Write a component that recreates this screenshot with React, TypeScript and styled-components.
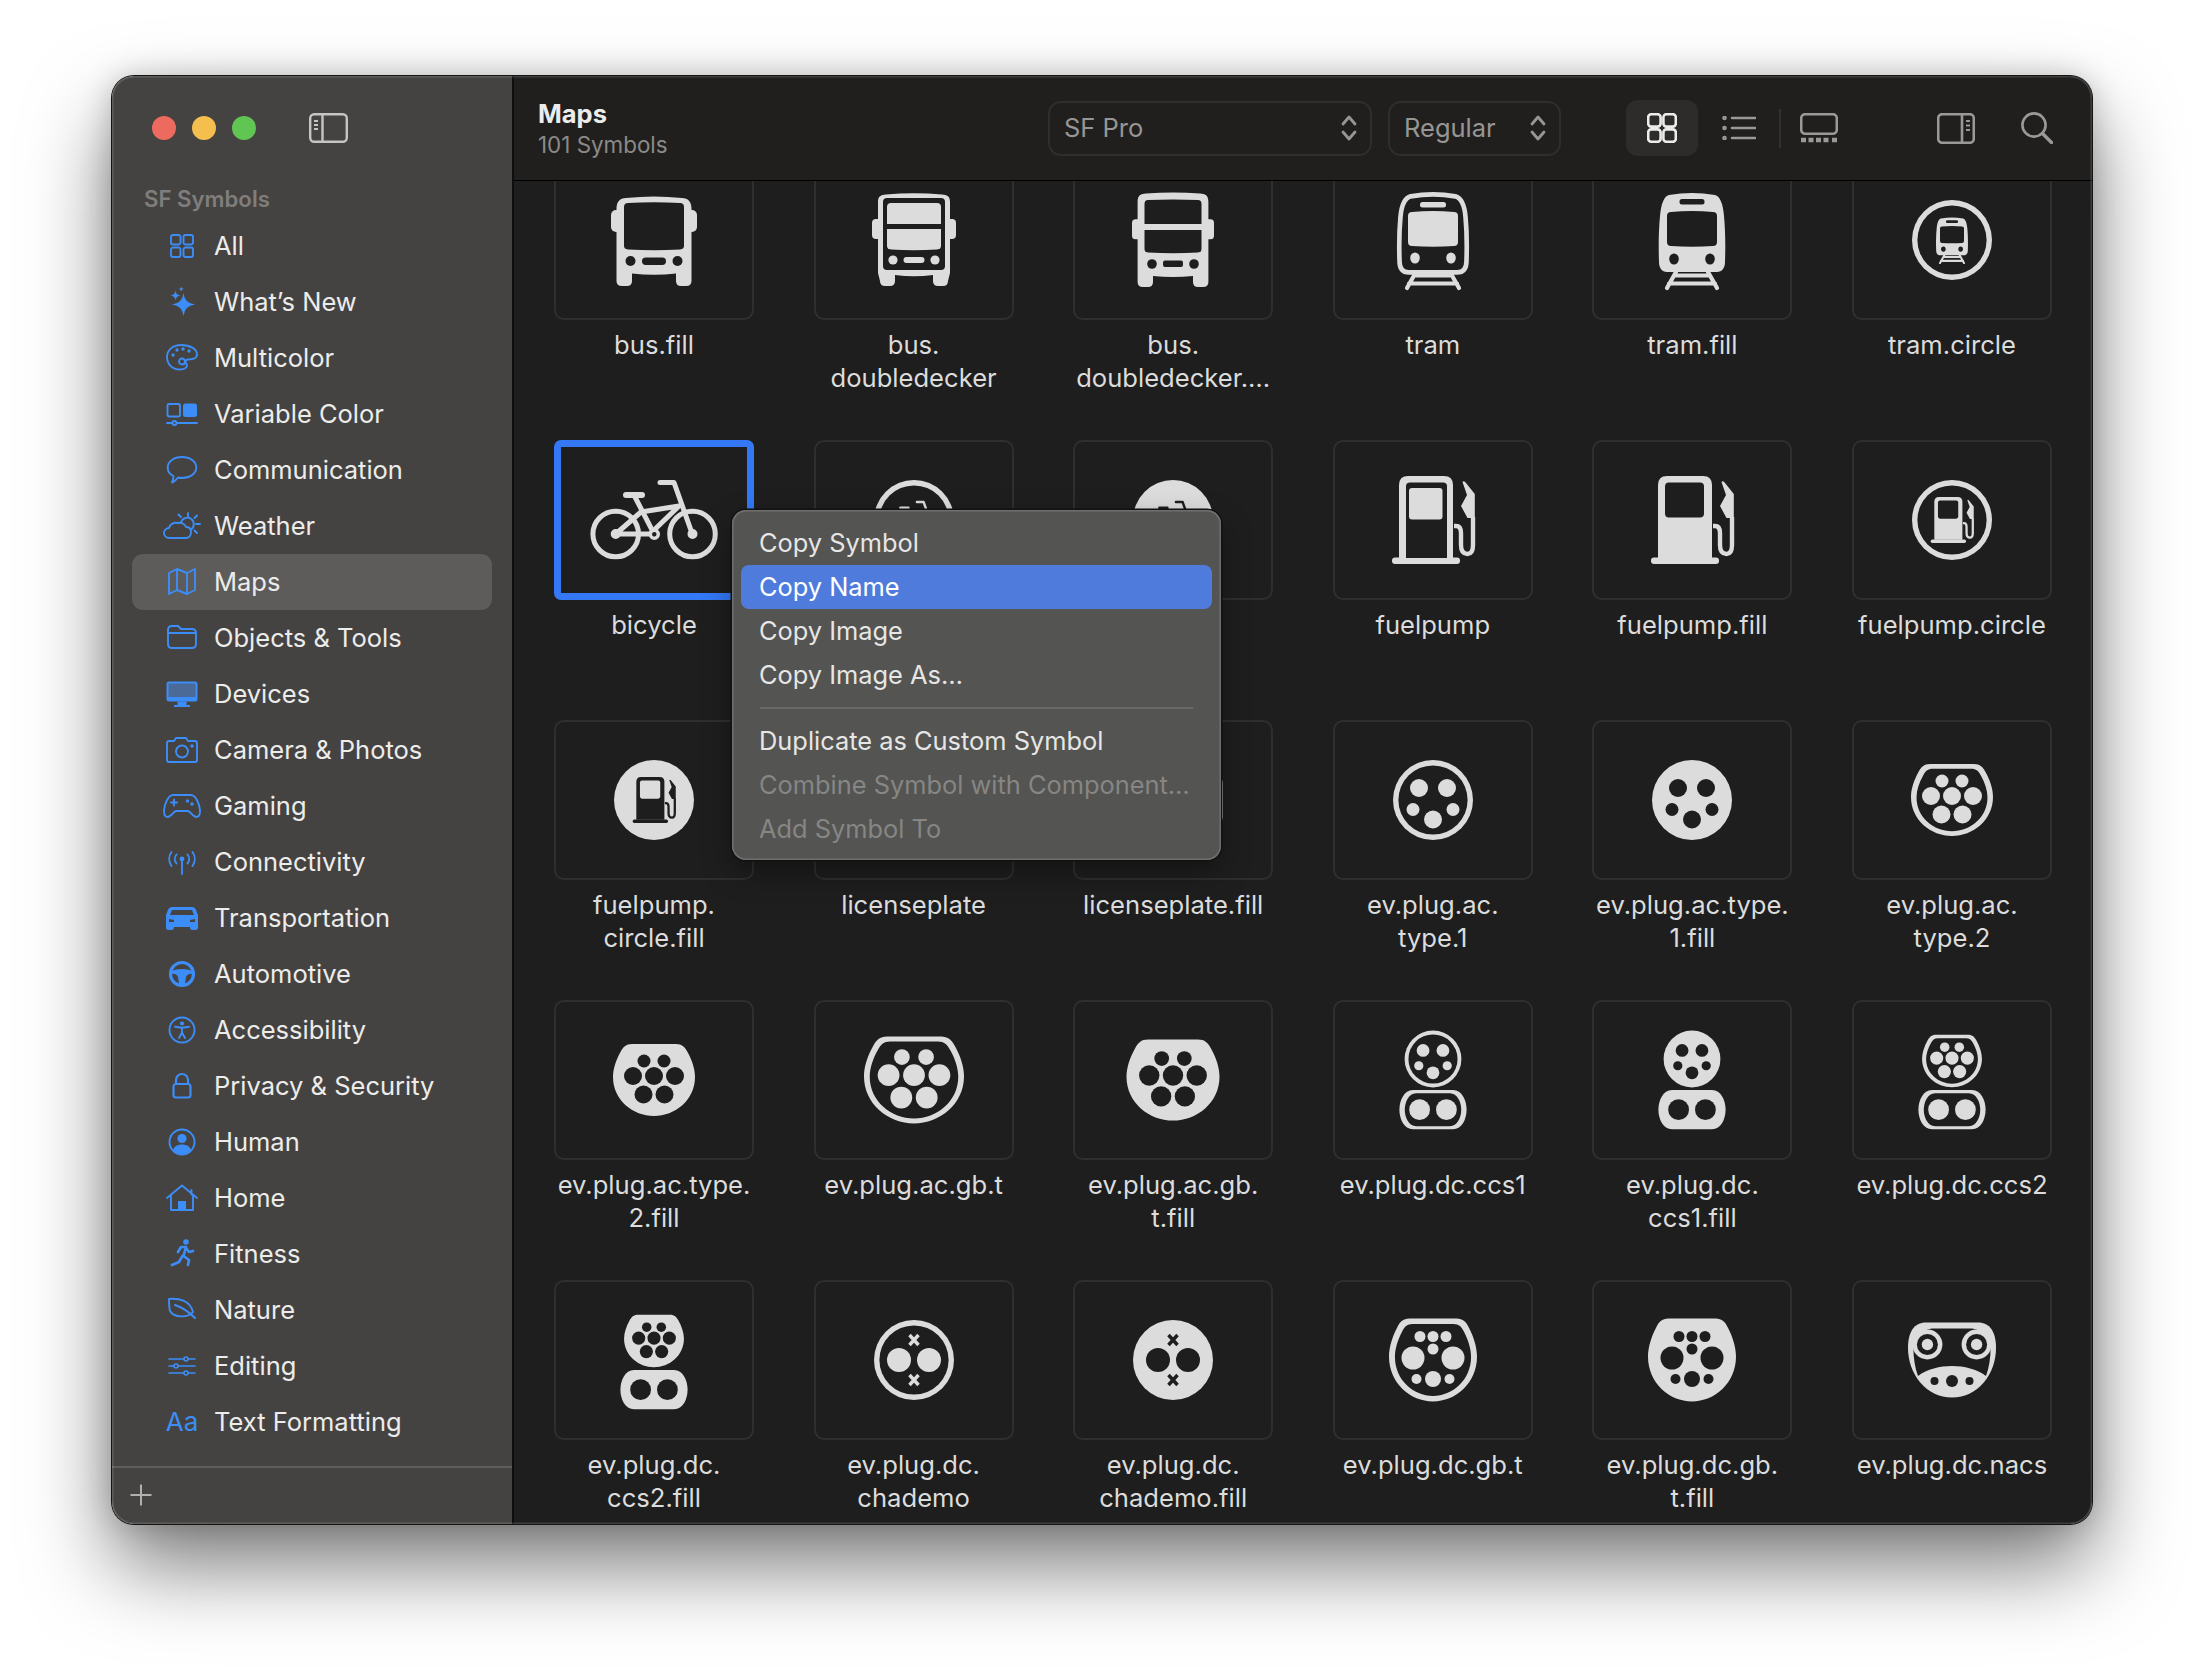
import React from "react";
import styled, { createGlobalStyle } from "styled-components";

const FG = "#dcdcdc";
const BG = "#1e1e1e";
const BLUE = "#3c8df7";
const FONT = `Inter, "Liberation Sans", sans-serif`;

const GlobalStyle = createGlobalStyle`
	html, body {
		margin: 0;
		padding: 0;
		background: #ffffff;
		font-family: ${FONT};
	}
`;

const Page = styled.div`
	width: 2204px;
	height: 1672px;
	padding: 76px 0 0 112px;
	box-sizing: border-box;
	overflow: hidden;
`;

const Window = styled.div`
	position: relative;
	width: 1980px;
	height: 1448px;
	display: flex;
	border-radius: 22px;
	overflow: hidden;
	box-shadow: 0 0 0 1px #141414, 0 42px 84px rgba(0, 0, 0, 0.52), 0 0 30px rgba(0, 0, 0, 0.2);
	&::after {
		content: "";
		position: absolute;
		inset: 0;
		border-radius: 22px;
		box-shadow: inset 0 0 0 1.5px rgba(255, 255, 255, 0.14);
		pointer-events: none;
	}
`;

/* sidebar */
const Sidebar = styled.aside`
	width: 400px;
	flex: none;
	display: flex;
	flex-direction: column;
	background: #454341;
`;

const TitleBar = styled.div`
	height: 104px;
	flex: none;
	display: flex;
	align-items: center;
	padding-left: 40px;
	gap: 16px;
`;

const Light = styled.span<{ $color: string }>`
	width: 24px;
	height: 24px;
	border-radius: 50%;
	background: ${(p) => p.$color};
`;

const SidebarToggle = styled.svg`
	margin-left: 37px;
	width: 39px;
	height: 30px;
	fill: none;
	stroke: #c6c5c4;
	stroke-width: 2.4;
`;

const SectionTitle = styled.div`
	height: 38px;
	line-height: 38px;
	padding-left: 32px;
	font-size: 22.2px;
	font-weight: 600;
	color: #7f7e7c;
`;

const NavList = styled.nav`
	display: flex;
	flex-direction: column;
`;

const NavItem = styled.div<{ $active?: boolean }>`
	height: 56px;
	margin: 0 20px;
	padding-left: 30px;
	display: flex;
	align-items: center;
	gap: 12px;
	border-radius: 11px;
	font-size: 25.5px;
	color: #ececeb;
	background: ${(p) => (p.$active ? "#5d5c5b" : "transparent")};
`;

const NavText = styled.span`
	margin-top: -2px;
`;

const NavIcon = styled.svg`
	width: 40px;
	height: 40px;
	flex: none;
	fill: none;
	stroke: ${BLUE};
	stroke-width: 1.9;
	stroke-linecap: round;
	stroke-linejoin: round;
`;

const NavGlyph = styled.span`
	width: 40px;
	flex: none;
	margin-top: -2px;
	text-align: center;
	font-size: 26px;
	color: ${BLUE};
`;

const SidebarFooter = styled.div`
	margin-top: auto;
	height: 58px;
	box-sizing: border-box;
	border-top: 2px solid #5f5e5c;
	padding-left: 18px;
	padding-bottom: 2px;
	display: flex;
	align-items: center;
`;

const PlusIcon = styled.svg`
	width: 22px;
	height: 22px;
	stroke: #b1b0af;
	stroke-width: 2;
`;

/* main pane */
const Main = styled.main`
	flex: 1;
	min-width: 0;
	display: flex;
	flex-direction: column;
	border-left: 2px solid #0e0e0e;
	background: ${BG};
`;

const Toolbar = styled.header`
	height: 105px;
	flex: none;
	box-sizing: border-box;
	display: flex;
	align-items: center;
	padding: 0 25px 0 24px;
	background: #201f1e;
	border-bottom: 1.5px solid #000;
`;

const TitleBlock = styled.div`
	flex: 1;
	display: flex;
	flex-direction: column;
	gap: 2px;
`;

const Title = styled.div`
	font-size: 25.5px;
	line-height: 30px;
	font-weight: 700;
	color: #ececec;
`;

const Subtitle = styled.div`
	font-size: 22.4px;
	line-height: 27px;
	color: #8b8a88;
`;

const Select = styled.div<{ $width: number; $gap?: number }>`
	width: ${(p) => p.$width}px;
	height: 55px;
	margin-left: ${(p) => p.$gap ?? 0}px;
	box-sizing: border-box;
	display: flex;
	align-items: center;
	justify-content: space-between;
	padding: 0 13px 2px 14px;
	border: 2px solid #2f2e2d;
	border-radius: 13px;
	font-size: 25.5px;
	color: #979694;
`;

const Chevrons = styled.svg`
	width: 16px;
	height: 28px;
	margin-top: 2px;
	fill: none;
	stroke: #979694;
	stroke-width: 2.8;
	stroke-linecap: round;
	stroke-linejoin: round;
`;

const ToolButton = styled.div<{ $width: number; $active?: boolean; $gap?: number }>`
	width: ${(p) => p.$width}px;
	height: 56px;
	margin-left: ${(p) => p.$gap ?? 0}px;
	display: flex;
	align-items: center;
	justify-content: center;
	border-radius: 12px;
	background: ${(p) => (p.$active ? "#2d2c2b" : "transparent")};
`;

const ToolSep = styled.span`
	width: 2px;
	height: 39px;
	background: #323130;
`;

const ToolIcon = styled.svg<{ $bright?: boolean }>`
	fill: none;
	stroke: ${(p) => (p.$bright ? "#ececec" : "#9a9998")};
	stroke-width: 2.6;
	stroke-linecap: round;
`;

const Content = styled.div`
	flex: 1;
	min-height: 0;
	overflow: hidden;
	padding-left: 40px;
`;

const SymbolGrid = styled.div`
	margin-top: -21px;
	display: grid;
	grid-template-columns: repeat(6, 200px);
	column-gap: 59.6px;
	grid-auto-rows: 280px;
`;

const Cell = styled.div`
	display: flex;
	flex-direction: column;
	align-items: center;
`;

const Card = styled.div<{ $selected?: boolean }>`
	width: 200px;
	height: 160px;
	box-sizing: border-box;
	flex: none;
	display: flex;
	align-items: center;
	justify-content: center;
	border: ${(p) => (p.$selected ? "7.5px solid #3478f6" : "2px solid #2f2f2f")};
	border-radius: ${(p) => (p.$selected ? "7px" : "10px")};
`;

const Glyph = styled.svg`
	width: 140px;
	height: 140px;
	flex: none;
	fill: ${FG};
`;

const Label = styled.div`
	margin-top: 9px;
	width: 240px;
	text-align: center;
	white-space: pre-line;
	font-size: 25.6px;
	line-height: 32.5px;
	color: ${FG};
`;

/* context menu */
const Menu = styled.div`
	position: absolute;
	left: 620px;
	top: 434px;
	width: 489px;
	height: 350px;
	box-sizing: border-box;
	padding: 11px 9px 9px;
	background: #545452;
	border-radius: 14px;
	box-shadow: 0 0 0 1.5px #111, inset 0 0 0 1.5px #6f6f6d, 0 12px 30px rgba(0, 0, 0, 0.35);
`;

const MenuItem = styled.div<{ $active?: boolean; $disabled?: boolean }>`
	height: 44px;
	padding: 0 0 2px 18px;
	box-sizing: border-box;
	display: flex;
	align-items: center;
	border-radius: 8px;
	font-size: 25.4px;
	color: ${(p) => (p.$active ? "#ffffff" : p.$disabled ? "#868684" : "#e6e6e5")};
	background: ${(p) => (p.$active ? "#4f7cdc" : "transparent")};
`;

const MenuSep = styled.div`
	height: 2px;
	margin: 10px 19px;
	background: #6a6a68;
`;

/* symbol drawings, coordinates are pixels from the middle of the card */
type Pin = [number, number, number];

const CIRCLE = "M0 -40 A40 40 0 1 1 0 40 A40 40 0 1 1 0 -40Z";
const TYPE2 =
	"M-22 -36 H22 C28 -36 31 -33 33.5 -28 C38 -20 41 -11 41 -3 C41 20 21 36 0 36 C-21 36 -41 20 -41 -3 C-41 -11 -38 -20 -33.5 -28 C-31 -33 -28 -36 -22 -36Z";
const CAPSULE =
	"M-20 -19.6 H20 C29 -19.6 33.6 -9 33.6 0 C33.6 9 29 19.6 20 19.6 H-20 C-29 19.6 -33.6 9 -33.6 0 C-33.6 -9 -29 -19.6 -20 -19.6Z";

const TYPE1_PINS: Pin[] = [[-14, -12, 9], [14, -12, 9], [-20, 9.5, 6.5], [20, 9.5, 6.5], [0, 19.5, 9]];
const TYPE2_PINS: Pin[] = [[-10, -19, 6.5], [10, -19, 6.5], [-21, -4, 9], [0, -4, 9], [21, -4, 9], [-10.5, 14.5, 9], [10.5, 14.5, 9]];
const CAPSULE_PINS: Pin[] = [[-13.4, 0, 10.4], [13.4, 0, 10.4]];
const GBT_PINS: Pin[] = [[-13, -23.5, 5.5], [0, -23.5, 5.5], [13, -23.5, 5.5], [0, -11, 5.5], [-20, -2, 11.5], [20, -2, 11.5], [-16.5, 19, 5], [0, 19, 8], [16.5, 19, 5]];

interface PlugProps {
	d: string;
	fill?: boolean;
	pins: Pin[];
	sx?: number;
	sy?: number;
	k?: number;
	cy?: number;
	inset?: number;
	children?: React.ReactNode;
}

const Plug = ({ d, fill, pins, sx = 1, sy = 1, k = 1, cy = 0, inset = 0.865, children }: PlugProps) => (
	<g transform={`translate(0 ${cy})`}>
		<path d={d} transform={`scale(${sx} ${sy})`} fill={FG} />
		{!fill && <path d={d} transform={`scale(${sx * inset} ${sy * inset})`} fill={BG} />}
		{pins.map(([x, y, r]) => (
			<circle key={`${x}-${y}`} cx={x * k} cy={y * k} r={r * k} fill={fill ? BG : FG} />
		))}
		{children}
	</g>
);

const Combo = ({ top, fill }: { top: "ccs1" | "ccs2"; fill?: boolean }) => (
	<>
		{top === "ccs1" ? (
			<Plug d={CIRCLE} sx={0.71} sy={0.71} k={0.71} cy={-21} pins={TYPE1_PINS} fill={fill} />
		) : (
			<Plug d={TYPE2} sx={0.73} sy={0.73} k={0.73} cy={-19} pins={TYPE2_PINS} fill={fill} />
		)}
		<Plug d={CAPSULE} cy={29.7} pins={CAPSULE_PINS} fill={fill} inset={0.84} />
	</>
);

const Cross = ({ y, color }: { y: number; color: string }) => (
	<path d={`M-4.5 ${y - 5} L4.5 ${y + 5} M4.5 ${y - 5} L-4.5 ${y + 5}`} stroke={color} strokeWidth={3.4} fill="none" />
);

const Chademo = ({ fill }: { fill?: boolean }) => (
	<Plug d={CIRCLE} fill={fill} pins={[[-15, 0, 12], [15, 0, 12]]}>
		<Cross y={-20} color={fill ? BG : FG} />
		<Cross y={20} color={fill ? BG : FG} />
	</Plug>
);

const Nacs = () => (
	<g>
		<path d="M-26 -37.5 H26 C38 -37.5 44 -28 44 -12 C44 14 26 37.5 0 37.5 C-26 37.5 -44 14 -44 -12 C-44 -28 -38 -37.5 -26 -37.5Z" fill={FG} />
		<path d="M-20 -31.5 H20 C33 -30 38.6 -20 38.6 -12 C38.6 -2 37 8 34 16 C25 9 12 6 0 6 C-12 6 -25 9 -34 16 C-37 8 -38.6 -2 -38.6 -12 C-38.6 -20 -33 -30 -20 -31.5Z" fill={BG} />
		{[-24.6, 24.6].map((x) => (
			<g key={x}>
				<circle cx={x} cy={-15.5} r={15} fill={FG} />
				<circle cx={x} cy={-15.5} r={10.5} fill={BG} />
				<circle cx={x} cy={-15.5} r={5.7} fill={FG} />
			</g>
		))}
		<circle cx={-17.5} cy={21} r={4} fill={BG} />
		<circle cx={0} cy={21} r={6} fill={BG} />
		<circle cx={17.5} cy={21} r={4} fill={BG} />
	</g>
);

const BusFill = () => (
	<g>
		<rect x={-43} y={-30} width={86} height={22} rx={5} />
		<path d="M-37.5 -31 C-37.5 -39 -34 -41.5 -28 -42 Q0 -45 28 -42 C34 -41.5 37.5 -39 37.5 -31 L37.5 41 Q37.5 46 32 46 L27 46 Q22 46 22 41 L22 33.5 Q0 36 -22 33.5 L-22 41 Q-22 46 -27 46 L-32 46 Q-37.5 46 -37.5 41Z" />
		<path d="M-30 -33 Q-30 -37 -26 -37 Q0 -38.5 26 -37 Q30 -37 30 -33 V6 Q30 9 26 9.5 Q0 11 -26 9.5 Q-30 9 -30 6Z" fill={BG} />
		<circle cx={-23.5} cy={21} r={5} fill={BG} />
		<circle cx={23.5} cy={21} r={5} fill={BG} />
		<rect x={-12} y={17.5} width={24} height={7.5} rx={3.7} fill={BG} />
	</g>
);

const BusDecker = () => (
	<g>
		<rect x={-42} y={-21} width={84} height={20} rx={4} />
		<path d="M-36 -38 C-36 -44 -33 -45 -28 -45.5 Q0 -48 28 -45.5 C33 -45 36 -44 36 -38 L36 33 L34 41 Q34 46 29 46 L24 46 Q19 46 19 41 L19 35 Q0 37.5 -19 35 L-19 41 Q-19 46 -24 46 L-29 46 Q-34 46 -34 41 L-36 33Z" />
		<path d="M-31 -38 Q-31 -42 -27 -42 H27 Q31 -42 31 -38 V26 Q31 30 27 30 H-27 Q-31 30 -31 26Z" fill={BG} />
		<path d="M-27 -33 Q-27 -37 -23 -37 H23 Q27 -37 27 -33 V-16 H-27Z" />
		<path d="M-27 -11 H27 V6 Q27 9 23 9.5 Q0 11 -23 9.5 Q-27 9 -27 6Z" />
		<circle cx={-21} cy={20} r={4.6} />
		<circle cx={21} cy={20} r={4.6} />
		<rect x={-10.5} y={17} width={21} height={6} rx={3} />
	</g>
);

const BusDeckerFill = () => (
	<g>
		<rect x={-41} y={-20.7} width={82} height={20} rx={3.5} />
		<path d="M-35.4 -38 C-35.4 -45 -32 -46 -27 -46.5 Q0 -48.5 27 -46.5 C32 -46 35.4 -45 35.4 -38 L35.4 42 Q35.4 47 30 47 L25 47 Q20 47 20 42 L20 36 Q0 38 -20 36 L-20 42 Q-20 47 -25 47 L-30 47 Q-35.4 47 -35.4 42Z" />
		<path d="M-28.5 -36 Q-28.5 -40 -25 -40 Q0 -41 25 -40 Q28.5 -40 28.5 -36 V-16 H-28.5Z" fill={BG} />
		<path d="M-28.5 -10 H28.5 V9 Q28.5 12 25 12.5 Q0 14 -25 12.5 Q-28.5 12 -28.5 9Z" fill={BG} />
		<circle cx={-21} cy={24} r={4.8} fill={BG} />
		<circle cx={21} cy={24} r={4.8} fill={BG} />
		<rect x={-10} y={20.5} width={20} height={6.5} rx={2} fill={BG} />
	</g>
);

const Track = ({ spread }: { spread: number }) => (
	<path
		d={`M${-spread} 32 L${-spread - 9} 48 M${spread} 32 L${spread + 9} 48 M${-spread - 7} 43.5 H${spread + 7} M${-spread - 1} 35.5 H${spread + 1}`}
		stroke={FG}
		strokeWidth={4.2}
		strokeLinecap="round"
		fill="none"
	/>
);

const TRAM_OUTER =
	"M-24 -46 Q0 -50 24 -46 C31 -44 34 -36 35 -24 C36.5 -8 36.5 8 36 22 C36 30 33 34 26 34 H-26 C-33 34 -36 30 -36 22 C-36.5 8 -36.5 -8 -35 -24 C-34 -36 -31 -44 -24 -46Z";

const Tram = () => (
	<g>
		<Track spread={17} />
		<path d={TRAM_OUTER} transform="scale(0.93 0.95)" fill={BG} stroke={FG} strokeWidth={5} />
		<rect x={-13} y={-38} width={26} height={5.5} rx={2.5} />
		<path d="M-21 -28 Q0 -30 21 -28 Q25 -28 25 -24 L25 2 Q25 6 21 6 Q0 7.5 -21 6 Q-25 6 -25 2 L-25 -24 Q-25 -28 -21 -28Z" />
		<ellipse cx={-18} cy={18} rx={4.8} ry={5.5} />
		<ellipse cx={18} cy={18} rx={4.8} ry={5.5} />
	</g>
);

const TramFill = () => (
	<g>
		<Track spread={16} />
		<path d="M-23 -45 Q0 -49 23 -45 C28 -44 31 -36 32 -24 C33.5 -8 33.5 8 33 22 C33 28 30 32 25 32 H-25 C-30 32 -33 28 -33 22 C-33.5 8 -33.5 -8 -32 -24 C-31 -36 -28 -44 -23 -45Z" />
		<rect x={-12.5} y={-41} width={25} height={5.5} rx={2.5} fill={BG} />
		<path d="M-21 -28 Q0 -30 21 -28 Q25 -28 25 -24 L25 2 Q25 6 21 6 Q0 7.5 -21 6 Q-25 6 -25 2 L-25 -24 Q-25 -28 -21 -28Z" fill={BG} />
		<ellipse cx={-18} cy={19} rx={4.8} ry={5.5} fill={BG} />
		<ellipse cx={18} cy={19} rx={4.8} ry={5.5} fill={BG} />
	</g>
);

const Bicycle = ({ color = FG, back = BG }: { color?: string; back?: string }) => (
	<g fill="none" stroke={color} strokeWidth={5} strokeLinecap="round" strokeLinejoin="round">
		<circle cx={-38.3} cy={14} r={22.8} />
		<circle cx={38.5} cy={14} r={22.8} />
		<path d="M-38.3 14 H-4 L25 -14 L-13 -8 L-38.3 14" />
		<path d="M-19.5 -24 L0.3 14.3" />
		<path d="M-28 -25 H-12" strokeWidth={6} />
		<path d="M6 -37.5 H20 L38.3 14" />
		<circle cx={0.3} cy={14.3} r={4} fill={back} strokeWidth={3.5} />
		<circle cx={-38.3} cy={14} r={2.5} fill={color} />
		<circle cx={38.5} cy={14} r={2.5} fill={color} />
	</g>
);

const Pump = ({ hollow, color = FG, hole = BG }: { hollow?: boolean; color?: string; hole?: string }) => (
	<g fill={color}>
		<path d="M-34 -35 Q-34 -44 -25 -44 H11 Q20 -44 20 -35 V38 H-34Z" />
		<rect x={-41} y={37.5} width={68} height={6.5} rx={3} />
		{hollow ? (
			<>
				<path d="M-27 -34 Q-27 -37.5 -23 -37.5 H10 Q14 -37.5 14 -34 V38 H-27Z" fill={hole} />
				<rect x={-24} y={-32} width={33.5} height={31.5} rx={3} />
			</>
		) : (
			<rect x={-27} y={-37.5} width={39} height={35} rx={4} fill={hole} />
		)}
		<path d="M21 6 H23 Q28 6 28 13 V25 Q28 34 34.5 34 Q40 34 40 25 V-3" fill="none" stroke={color} strokeWidth={4.4} />
		<path d="M29.5 -38 Q31 -40 33 -37 L41.8 -26 V-2 H34.5 L28 -14 L34 -25Z" />
	</g>
);

const Plate = ({ fill }: { fill?: boolean }) => (
	<rect
		x={fill ? -50 : -47}
		y={fill ? -23 : -20}
		width={fill ? 100 : 94}
		height={fill ? 46 : 40}
		rx={6}
		fill={fill ? FG : "none"}
		stroke={fill ? "none" : FG}
		strokeWidth={5.5}
	/>
);

interface SymbolCell {
	id: string;
	label?: string;
	icon: React.ReactNode;
	selected?: boolean;
}

const SYMBOLS: SymbolCell[] = [
	{ id: "bus.fill", label: "bus.fill", icon: <BusFill /> },
	{ id: "bus.doubledecker", label: "bus.\ndoubledecker", icon: <BusDecker /> },
	{ id: "bus.doubledecker.fill", label: "bus.\ndoubledecker.…", icon: <BusDeckerFill /> },
	{ id: "tram", label: "tram", icon: <Tram /> },
	{ id: "tram.fill", label: "tram.fill", icon: <TramFill /> },
	{
		id: "tram.circle",
		label: "tram.circle",
		icon: (
			<Plug d={CIRCLE} pins={[]}>
				<g transform="scale(0.48)">
					<TramFill />
				</g>
			</Plug>
		),
	},
	{ id: "bicycle", label: "bicycle", icon: <Bicycle />, selected: true },
	// the names of these two sit behind the menu
	{
		id: "bicycle.circle",
		icon: (
			<Plug d={CIRCLE} pins={[]}>
				<g transform="scale(0.48)">
					<Bicycle />
				</g>
			</Plug>
		),
	},
	{
		id: "bicycle.circle.fill",
		icon: (
			<Plug d={CIRCLE} pins={[]} fill>
				<g transform="scale(0.48)">
					<Bicycle color={BG} back={FG} />
				</g>
			</Plug>
		),
	},
	{ id: "fuelpump", label: "fuelpump", icon: <Pump hollow /> },
	{ id: "fuelpump.fill", label: "fuelpump.fill", icon: <Pump /> },
	{
		id: "fuelpump.circle",
		label: "fuelpump.circle",
		icon: (
			<Plug d={CIRCLE} pins={[]}>
				<g transform="scale(0.52)">
					<Pump />
				</g>
			</Plug>
		),
	},
	{
		id: "fuelpump.circle.fill",
		label: "fuelpump.\ncircle.fill",
		icon: (
			<Plug d={CIRCLE} pins={[]} fill>
				<g transform="scale(0.52)">
					<Pump color={BG} hole={FG} />
				</g>
			</Plug>
		),
	},
	{ id: "licenseplate", label: "licenseplate", icon: <Plate /> },
	{ id: "licenseplate.fill", label: "licenseplate.fill", icon: <Plate fill /> },
	{ id: "type.1", label: "ev.plug.ac.\ntype.1", icon: <Plug d={CIRCLE} pins={TYPE1_PINS} /> },
	{ id: "type.1.fill", label: "ev.plug.ac.type.\n1.fill", icon: <Plug d={CIRCLE} pins={TYPE1_PINS} fill /> },
	{ id: "type.2", label: "ev.plug.ac.\ntype.2", icon: <Plug d={TYPE2} pins={TYPE2_PINS} /> },
	{ id: "type.2.fill", label: "ev.plug.ac.type.\n2.fill", icon: <Plug d={TYPE2} pins={TYPE2_PINS} fill /> },
	{ id: "ac.gb.t", label: "ev.plug.ac.gb.t", icon: <Plug d={TYPE2} sx={1.22} sy={1.21} k={1.21} pins={TYPE2_PINS} inset={0.885} /> },
	{ id: "ac.gb.t.fill", label: "ev.plug.ac.gb.\nt.fill", icon: <Plug d={TYPE2} sx={1.134} sy={1.125} k={1.13} pins={TYPE2_PINS} fill /> },
	{ id: "ccs1", label: "ev.plug.dc.ccs1", icon: <Combo top="ccs1" /> },
	{ id: "ccs1.fill", label: "ev.plug.dc.\nccs1.fill", icon: <Combo top="ccs1" fill /> },
	{ id: "ccs2", label: "ev.plug.dc.ccs2", icon: <Combo top="ccs2" /> },
	{ id: "ccs2.fill", label: "ev.plug.dc.\nccs2.fill", icon: <Combo top="ccs2" fill /> },
	{ id: "chademo", label: "ev.plug.dc.\nchademo", icon: <Chademo /> },
	{ id: "chademo.fill", label: "ev.plug.dc.\nchademo.fill", icon: <Chademo fill /> },
	{ id: "dc.gb.t", label: "ev.plug.dc.gb.t", icon: <Plug d={TYPE2} sx={1.073} sy={1.153} pins={GBT_PINS} /> },
	{ id: "dc.gb.t.fill", label: "ev.plug.dc.gb.\nt.fill", icon: <Plug d={TYPE2} sx={1.073} sy={1.153} pins={GBT_PINS} fill /> },
	{ id: "nacs", label: "ev.plug.dc.nacs", icon: <Nacs /> },
];

const Star = ({ x, y, r }: { x: number; y: number; r: number }) => {
	const q = r * 0.1;
	return (
		<path
			d={`M${x} ${y - r} Q${x + q} ${y - q} ${x + r} ${y} Q${x + q} ${y + q} ${x} ${y + r} Q${x - q} ${y + q} ${x - r} ${y} Q${x - q} ${y - q} ${x} ${y - r}Z`}
			fill={BLUE}
			stroke="none"
		/>
	);
};

const Dot = ({ x, y, r = 1.7 }: { x: number; y: number; r?: number }) => <circle cx={x} cy={y} r={r} fill={BLUE} stroke="none" />;

const NAV_ICONS: Record<string, React.ReactNode> = {
	All: (
		<>
			<rect x={-11} y={-11} width={9.5} height={9.5} rx={2} />
			<rect x={1.5} y={-11} width={9.5} height={9.5} rx={2} />
			<rect x={-11} y={1.5} width={9.5} height={9.5} rx={2} />
			<rect x={1.5} y={1.5} width={9.5} height={9.5} rx={2} />
		</>
	),
	"What's New": (
		<>
			<Star x={1.5} y={2.6} r={11.5} />
			<Star x={-6.5} y={-6.4} r={5} />
			<Star x={-0.7} y={-12.9} r={2.6} />
		</>
	),
	Multicolor: (
		<>
			<path d="M-1 -13 C8 -13 15 -9 15 -3.5 C15 1 10 1.5 6 1.5 C3 1.5 3 4 4.5 6 C6 9 3 11.5 -2 11.5 C-10 11.5 -15 6 -15 -1 C-15 -8 -9 -13 -1 -13Z" />
			<circle cx={0} cy={3.5} r={3} />
			<Dot x={-9} y={-3} />
			<Dot x={-5} y={-8} />
			<Dot x={1} y={-9} />
			<Dot x={7} y={-7} />
		</>
	),
	"Variable Color": (
		<>
			<rect x={-14.5} y={-10} width={12.5} height={12.5} rx={1.5} />
			<rect x={1} y={-10.5} width={14} height={13.5} rx={2.5} fill={BLUE} stroke="none" />
			<path d="M-15 9 H15" />
			<circle cx={-7.5} cy={9} r={2} fill="#454341" />
		</>
	),
	Communication: (
		<path d="M0 -13 C8 -13 14.3 -8.5 14.3 -2.5 C14.3 3.5 8 8 0 8 C-1.5 8 -3 7.8 -4 7.5 C-6 10 -8 12 -10 12.5 C-9 10.5 -8.5 8 -8.5 6 C-12 4.5 -14.3 1.5 -14.3 -2.5 C-14.3 -8.5 -8 -13 0 -13Z" />
	),
	Weather: (
		<>
			<path d="M-12.5 12 C-16 12 -18 9.5 -18 7 C-18 4 -15.5 2 -13 2 C-12 -2 -8 -4 -4 -3 C-1 -4 3 -2 4 1 C7 1 9 3 9 6 C9 9.5 7 12 4 12Z" />
			<path d="M-1 -3.5 A6.5 6.5 0 1 1 9 3.5" />
			<path d="M6 -13 V-9.5 M12.5 -8 L15 -10.5 M14 -2 H18 M12.5 4.5 L15 7 M-1 -9 L-3.5 -11.5" />
		</>
	),
	Maps: <path d="M-13 -9 L-5 -13 L5 -9 L13 -13 V8 L5 12 L-5 8 L-13 12Z M-5 -13 V8 M5 -9 V12" />,
	"Objects & Tools": <path d="M-14 -8 Q-14 -12 -10 -12 H-4 L-1 -9 H10 Q14 -9 14 -5 V6 Q14 10 10 10 H-10 Q-14 10 -14 6Z M-14 -5 H14" />,
	Devices: (
		<>
			<rect x={-15.5} y={-12.5} width={31} height={20} rx={2.5} fill={BLUE} stroke="none" />
			<rect x={-13.5} y={-10.5} width={27} height={13.5} fill="#4c6a97" stroke="none" />
			<path d="M-4.5 7.5 H4.5 V11 H8 V13 H-8 V11 H-4.5Z" fill={BLUE} stroke="none" />
		</>
	),
	"Camera & Photos": (
		<>
			<path d="M-15 -7 Q-15 -9 -13 -9 H-8 L-6 -12 H4 L6 -9 H13 Q15 -9 15 -7 V10 Q15 12 13 12 H-13 Q-15 12 -15 10Z" />
			<circle cx={0} cy={1.5} r={6} />
			<Dot x={10} y={-4} />
		</>
	),
	Gaming: (
		<>
			<path d="M-9 -11 H9 C13 -11 15 -7 17 -1 C19 6 18 11 14.5 11 C11 11 9 6 6 5 H-6 C-9 6 -11 11 -14.5 11 C-18 11 -19 6 -17 -1 C-15 -7 -13 -11 -9 -11Z" />
			<path d="M-11 -3.5 H-5 M-8 -6.5 V-0.5" />
			<Dot x={5.5} y={-5} />
			<Dot x={10} y={-2} />
		</>
	),
	Connectivity: (
		<>
			<Dot x={0} y={-3} r={2.4} />
			<path d="M0 -3 V12" />
			<path d="M-5.5 -7.5 A7 7 0 0 0 -5.5 1.5 M5.5 -7.5 A7 7 0 0 1 5.5 1.5" />
			<path d="M-10.5 -10 A12 12 0 0 0 -10.5 4 M10.5 -10 A12 12 0 0 1 10.5 4" />
		</>
	),
	Transportation: (
		<path
			fillRule="evenodd"
			fill={BLUE}
			stroke="none"
			d="M-10 -11 H10 Q13 -11 14 -8 L16 -3 V10 Q16 12 13.5 12 H10.5 Q8 12 8 10 V9 H-8 V10 Q-8 12 -10.5 12 H-13.5 Q-16 12 -16 10 V-3 L-14 -8 Q-13 -11 -10 -11Z M-10 -8 L-12 -3 H12 L10 -8Z M-13 1 V4 H-8 L-8 2Z M13 1 V4 H8 L8 2Z"
		/>
	),
	Automotive: (
		<>
			<circle cx={0} cy={0} r={11.5} strokeWidth={3.2} />
			<path d="M-11 -3 Q0 -7 11 -3 V0 Q6 -1 4 3 L3 10 H-3 L-4 3 Q-6 -1 -11 0Z" fill={BLUE} stroke="none" />
		</>
	),
	Accessibility: (
		<>
			<circle cx={0} cy={0} r={12.5} />
			<Dot x={0} y={-6.5} r={2.1} />
			<path d="M-7 -3.2 L0 -2.2 L7 -3.2 M0 -2.2 V2.5 L-3 8 M0 2.5 L3 8" />
		</>
	),
	"Privacy & Security": (
		<>
			<rect x={-8.5} y={-2} width={17} height={13.5} rx={2.5} strokeWidth={2.2} />
			<path d="M-6 -2 V-6 A6 6 0 0 1 6 -6 V-2" strokeWidth={2.2} />
		</>
	),
	Human: (
		<>
			<circle cx={0} cy={0} r={12.5} />
			<Dot x={0} y={-3.5} r={4.6} />
			<path d="M-9 8 C-7 3 -3 2.5 0 2.5 C3 2.5 7 3 9 8 A12 12 0 0 1 -9 8Z" fill={BLUE} stroke="none" />
		</>
	),
	Home: (
		<>
			<path d="M-15 0 L0 -12.5 L15 0 M9.5 -8 V-3.5" />
			<path d="M-11 -2.5 V12 H11 V-2.5" />
			<rect x={-4} y={3} width={8} height={9} fill={BLUE} stroke="none" />
		</>
	),
	Fitness: (
		<>
			<Dot x={4} y={-12} r={2.8} />
			<path d="M-4 -2 L-1 -7 H4 L1.5 2 L7 6 L6 11 M4 -6 L7 -2 L11 -3 M0.5 2 L-3 8 L-10 11" strokeWidth={2.7} />
		</>
	),
	Nature: <path d="M-13 -11 C-4 -12 8 -10 11 2 C6 8 -8 8 -12 1 C-13 -3 -13 -7 -13 -11Z M-7 -5 C-1 -3 7 2 13 8" />,
	Editing: (
		<>
			<path d="M-13 -7 H13 M-13 0 H13 M-13 7 H13" strokeWidth={1.6} />
			<circle cx={4} cy={-7} r={2} fill="#454341" strokeWidth={1.6} />
			<circle cx={-6} cy={0} r={2} fill="#454341" strokeWidth={1.6} />
			<circle cx={4} cy={7} r={2} fill="#454341" strokeWidth={1.6} />
		</>
	),
};

const NAV_ITEMS = [
	"All",
	"What's New",
	"Multicolor",
	"Variable Color",
	"Communication",
	"Weather",
	"Maps",
	"Objects & Tools",
	"Devices",
	"Camera & Photos",
	"Gaming",
	"Connectivity",
	"Transportation",
	"Automotive",
	"Accessibility",
	"Privacy & Security",
	"Human",
	"Home",
	"Fitness",
	"Nature",
	"Editing",
	"Text Formatting",
];

const App = () => {
	return (
		<Page>
			<GlobalStyle />
			<Window>
				<Sidebar>
					<TitleBar>
						<Light $color="#ec6a5e" />
						<Light $color="#f4bf4f" />
						<Light $color="#61c554" />
						<SidebarToggle viewBox="0 0 39 30">
							<rect x={1.2} y={1.2} width={36.6} height={27.6} rx={4} />
							<path d="M13.5 1.2 V28.8" />
							<path d="M5 8 H9 M5 12 H9 M5 16 H9" strokeWidth={1.8} />
						</SidebarToggle>
					</TitleBar>
					<SectionTitle>SF Symbols</SectionTitle>
					<NavList>
						{NAV_ITEMS.map((name) => (
							<NavItem key={name} $active={name === "Maps"}>
								{name === "Text Formatting" ? (
									<NavGlyph>Aa</NavGlyph>
								) : (
									<NavIcon viewBox="-20 -20 40 40">{NAV_ICONS[name]}</NavIcon>
								)}
								<NavText>{name === "What's New" ? "What’s New" : name}</NavText>
							</NavItem>
						))}
					</NavList>
					<SidebarFooter>
						<PlusIcon viewBox="0 0 22 22">
							<path d="M11 0.5 V21.5 M0.5 11 H21.5" />
						</PlusIcon>
					</SidebarFooter>
				</Sidebar>
				<Main>
					<Toolbar>
						<TitleBlock>
							<Title>Maps</Title>
							<Subtitle>101 Symbols</Subtitle>
						</TitleBlock>
						<Select $width={324}>
							SF Pro
							<Chevrons viewBox="0 0 16 28">
								<path d="M2 10 L8 3 L14 10 M2 18 L8 25 L14 18" />
							</Chevrons>
						</Select>
						<Select $width={173} $gap={16}>
							Regular
							<Chevrons viewBox="0 0 16 28">
								<path d="M2 10 L8 3 L14 10 M2 18 L8 25 L14 18" />
							</Chevrons>
						</Select>
						<ToolButton $width={72} $active $gap={65}>
							<ToolIcon $bright width={30} height={30} viewBox="0 0 30 30">
								<rect x={1.2} y={1.2} width={12.4} height={12.4} rx={3} />
								<rect x={16.4} y={1.2} width={12.4} height={12.4} rx={3} />
								<rect x={1.2} y={16.4} width={12.4} height={12.4} rx={3} />
								<rect x={16.4} y={16.4} width={12.4} height={12.4} rx={3} />
							</ToolIcon>
						</ToolButton>
						<ToolButton $width={81}>
							<ToolIcon width={34} height={24} viewBox="0 0 34 24">
								<path d="M10 2 H33 M10 12 H33 M10 22 H33" />
								<circle cx={2.5} cy={2} r={1} />
								<circle cx={2.5} cy={12} r={1} />
								<circle cx={2.5} cy={22} r={1} />
							</ToolIcon>
						</ToolButton>
						<ToolSep />
						<ToolButton $width={76}>
							<ToolIcon width={38} height={30} viewBox="0 0 38 30">
								<rect x={1.2} y={1.2} width={35.6} height={19.6} rx={4} />
								<path d="M1 27 H6 M8.5 27 H13.5 M16 27 H21 M23.5 27 H28.5 M32 27 H37" strokeWidth={4.6} strokeLinecap="butt" />
							</ToolIcon>
						</ToolButton>
						<ToolButton $width={60} $gap={69}>
							<ToolIcon width={38} height={31} viewBox="0 0 38 31">
								<rect x={1.2} y={1.2} width={35.6} height={28.6} rx={4} />
								<path d="M25 1.2 V29.8" />
								<path d="M29 8 H33 M29 12.5 H33 M29 17 H33" strokeWidth={1.8} strokeLinecap="butt" />
							</ToolIcon>
						</ToolButton>
						<ToolButton $width={60} $gap={21}>
							<ToolIcon width={32} height={32} viewBox="0 0 32 32">
								<circle cx={13} cy={13} r={11.6} />
								<path d="M21.5 21.5 L30.5 30.5" strokeWidth={3.4} />
							</ToolIcon>
						</ToolButton>
					</Toolbar>
					<Content>
						<SymbolGrid>
							{SYMBOLS.map((item) => (
								<Cell key={item.id}>
									<Card $selected={item.selected}>
										<Glyph viewBox="-70 -70 140 140">{item.icon}</Glyph>
									</Card>
									{item.label && <Label>{item.label}</Label>}
								</Cell>
							))}
						</SymbolGrid>
					</Content>
				</Main>
				<Menu>
					<MenuItem>Copy Symbol</MenuItem>
					<MenuItem $active>Copy Name</MenuItem>
					<MenuItem>Copy Image</MenuItem>
					<MenuItem>Copy Image As…</MenuItem>
					<MenuSep />
					<MenuItem>Duplicate as Custom Symbol</MenuItem>
					<MenuItem $disabled>Combine Symbol with Component…</MenuItem>
					<MenuItem $disabled>Add Symbol To</MenuItem>
				</Menu>
			</Window>
		</Page>
	);
};

export default App;
